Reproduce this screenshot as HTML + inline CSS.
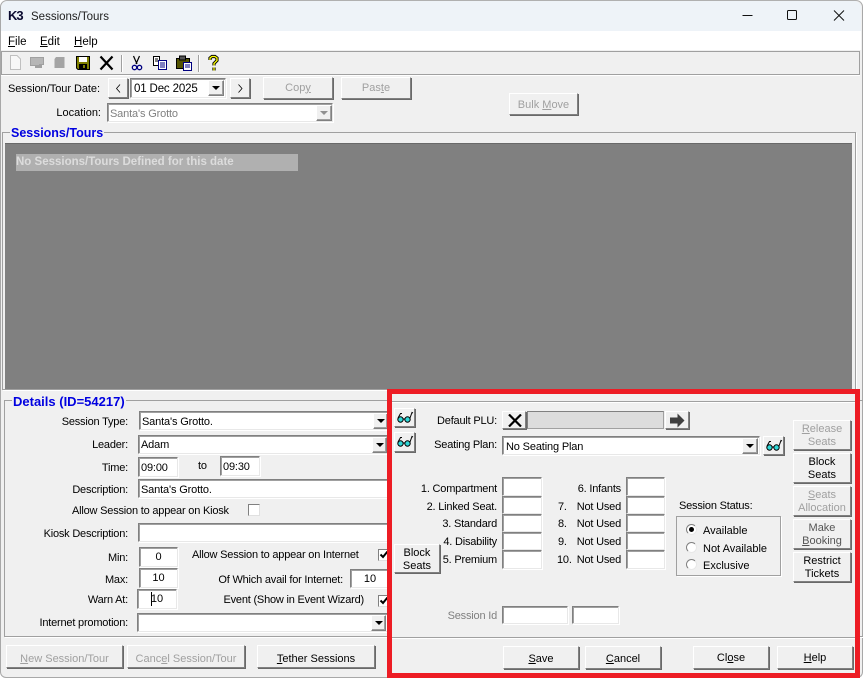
<!DOCTYPE html>
<html><head><meta charset="utf-8"><style>
*{box-sizing:border-box}
html,body{margin:0;padding:0;background:#fff}
#w{position:relative;width:863px;height:681px;overflow:hidden;background:#fff;font:11px/14px "Liberation Sans",sans-serif;color:#000}
#w div{position:absolute}
.t{white-space:nowrap;letter-spacing:-.2px}
.r{white-space:nowrap;text-align:right;letter-spacing:-.2px}
.n{letter-spacing:0}
.d{color:#a0a0a0}
.b{background:#f0f0f0;border:1px solid;border-color:#fff #808080 #808080 #fff;box-shadow:1px 1px 0 #696969;text-align:center;white-space:nowrap;line-height:13px;display:flex;align-items:center;justify-content:center}
.b.x{color:#a0a0a0}
.b.l{padding-top:2px}
.b.l2{padding-top:4px}
.b.l3{padding-top:5px}
.i{background:#fff;border:1px solid;border-color:#808080 #e8e8e8 #e8e8e8 #808080;box-shadow:inset 1px 1px 0 #a0a0a0,1px 1px 0 #fff;padding:3px 2px 0;white-space:nowrap;line-height:14px;letter-spacing:-.15px}
.c{text-align:center;padding-top:2px;letter-spacing:0}
.a{background:#f0f0f0;border:1px solid;border-color:#fff #808080 #808080 #fff;box-shadow:inset -1px -1px 0 #a0a0a0}
.a::after{content:"";position:absolute;left:3px;top:5px;border:4px solid transparent;border-top:4px solid #000;border-bottom:0}
.a.g::after{border-top-color:#909090}
.g1{border:1px solid #a0a0a0;box-shadow:1px 1px 0 #fff}
.ttl{color:#0000e0;font-weight:bold;background:#f0f0f0;white-space:nowrap;padding:0 1px;font-size:12.500px}
.chk{width:12px;height:12px;background:#fff;border:1px solid;border-color:#808080 #e0e0e0 #e0e0e0 #808080}
.rad{width:11px;height:11px;border-radius:50%;background:#fff;border:1px solid;border-color:#808080 #e8e8e8 #e8e8e8 #808080}
u{text-decoration:underline}
svg{position:absolute;display:block}
</style></head><body><div id="w">

<div style="left:0;top:0;width:863px;height:678px;background:#f0f0f0;border:1px solid #a8a8a8;border-top-color:#b0b0b0;border-radius:7px 7px 6px 6px"></div>
<div style="left:1px;top:1px;width:860px;height:30px;background:#eef3f8;border-radius:7px 7px 0 0"></div>
<div style="left:1px;top:31px;width:860px;height:19px;background:#fff"></div>

<div class="n" style="left:8px;top:9px;width:17px;height:14px;font:bold 13px/14px 'Liberation Sans',sans-serif;color:#0a0a30;letter-spacing:-1px;white-space:nowrap">K3</div>
<div class="t n" style="left:31px;top:10px;color:#222;font-size:11.500px">Sessions/Tours</div>
<svg style="left:740px;top:10px" width="110" height="12" fill="none" stroke="#111"><path d="M2.500 5.500H12.500"/><rect x="47.500" y="0.500" width="9" height="9" rx="1"/><path d="M94 0.500L104 10.500M104 0.500L94 10.500"/></svg>

<div class="t n" style="left:8px;top:35px;font-size:11.500px"><u>F</u>ile</div>
<div class="t n" style="left:40px;top:35px;font-size:11.500px"><u>E</u>dit</div>
<div class="t n" style="left:74px;top:35px;font-size:11.500px"><u>H</u>elp</div>

<div style="left:1px;top:51px;width:859px;height:24px;border:1px solid #a0a0a0;box-shadow:0 1px 0 #fff;background:#f0f0f0"></div>
<svg style="left:0;top:51px" width="240" height="24">
<path d="M10.500 4.500H17L20.500 8V18.500H10.500Z" fill="#f8f8f8" stroke="#c0c0c0"/>
<path d="M30 6H44V14H42V17H35V15H30Z" fill="#a0a0a0"/><path d="M32 7V14M34 7V14M36 7V14M38 7V14M40 7V13M42 7V13" stroke="#e0e0e0" stroke-width=".7"/>
<path d="M56 6H64.500V17H54.500V8Z" fill="#a4a4a4"/>
<path d="M76.500 5.500H89.500V18.500H78L76.500 17Z" fill="#808000" stroke="#000"/><rect x="79" y="6" width="8" height="5" fill="#fff"/><rect x="79" y="13" width="8" height="5" fill="#000"/><rect x="83" y="14" width="2" height="3" fill="#808000"/>
<path d="M100.500 5.500L112.500 18.500M112.500 5.500L100.500 18.500" stroke="#000" stroke-width="2.200"/>
<path d="M121.500 4V21" stroke="#a0a0a0"/><path d="M122.500 4V21" stroke="#fff"/>
<path d="M133.500 5L137 13M139.500 5L136 13" stroke="#000" stroke-width="1.200" fill="none"/><circle cx="134.500" cy="16.500" r="2.200" fill="none" stroke="#000080" stroke-width="1.300"/><circle cx="139.500" cy="16.500" r="2.200" fill="none" stroke="#000080" stroke-width="1.300"/>
<path d="M153.500 5.500H159.500V14.500H153.500Z" fill="#fff" stroke="#000"/><path d="M155 8H158M155 10H158" stroke="#000"/><path d="M158.500 9.500H166.500V18.500H158.500Z" fill="#fff" stroke="#000080"/><path d="M160 12H165M160 14H165M160 16H165" stroke="#000080"/>
<path d="M176.500 7.500H189.500V17.500H176.500Z" fill="#808000" stroke="#000"/><path d="M176 8h14v10h-14z" fill="#000" opacity=".35"/><rect x="179.500" y="5" width="6" height="4" fill="#555" stroke="#000"/><path d="M183.500 11.500H191.500V19.500H183.500Z" fill="#fff" stroke="#000080"/><path d="M185 14H190M185 16H190" stroke="#000080"/>
<path d="M198.500 4V21" stroke="#a0a0a0"/><path d="M199.500 4V21" stroke="#fff"/>
<path d="M210 9V7L212 5.500H215L217 7V9.500L214 12.500V14.500M214 16.500V19.500" fill="none" stroke="#000" stroke-width="3.200"/><path d="M210 9V7L212 5.500H215L217 7V9.500L214 12.500V14.500M214 16.500V19.500" fill="none" stroke="#ff0" stroke-width="1.300"/>
</svg>

<div class="r n" style="right:763px;top:82px;letter-spacing:-.05px">Session/Tour Date:</div>
<div class="b" style="left:108px;top:78px;width:20px;height:20px"><svg style="left:7px;top:5px" width="5" height="9"><path d="M4 .5L.5 4.500L4 8.500" fill="none" stroke="#000" stroke-width=".8"/></svg></div>
<div class="i n" style="left:130px;top:78px;width:96px;height:20px;font-size:11.500px;padding-left:3px">01 Dec 2025</div>
<div class="a" style="left:208px;top:80px;width:16px;height:16px"></div>
<div class="b" style="left:230px;top:78px;width:20px;height:20px"><svg style="left:7px;top:5px" width="5" height="9"><path d="M.5 .5L4 4.500L.5 8.500" fill="none" stroke="#000" stroke-width=".8"/></svg></div>
<div class="b x" style="left:263px;top:77px;width:70px;height:22px"><span>Cop<u>y</u></span></div>
<div class="b x" style="left:341px;top:77px;width:70px;height:22px"><span>Pas<u>t</u>e</span></div>
<div class="b x l" style="left:509px;top:93px;width:69px;height:22px"><span>Bulk <u>M</u>ove</span></div>
<div class="r n" style="right:762px;top:106px">Location:</div>
<div class="i d" style="left:107px;top:103px;width:226px;height:19px;color:#808080">Santa's Grotto</div>
<div class="a g" style="left:316px;top:105px;width:16px;height:16px"></div>

<div class="g1" style="left:2px;top:132px;width:854px;height:258px"></div>
<div style="left:5px;top:143px;width:847px;height:246px;background:#808080;border-top:1px solid #696969"></div>
<div style="left:16px;top:154px;width:282px;height:17px;background:#b0b0b0"></div>
<div class="t n" style="left:16px;top:155px;font-weight:bold;font-size:11.500px;color:#dcdcdc">No Sessions/Tours Defined for this date</div>
<div class="ttl" style="left:10px;top:126px">Sessions/Tours</div>

<div class="g1" style="left:4px;top:400px;width:860px;height:237px"></div>
<div class="ttl" style="left:12px;top:395px;font-size:13px">Details (ID=54217)</div>

<div class="r" style="right:735px;top:415px">Session Type:</div>
<div class="i" style="left:139px;top:411px;width:252px;height:19px">Santa's Grotto.</div>
<div class="a" style="left:373px;top:413px;width:15px;height:16px"></div>
<div class="r" style="right:735px;top:438px">Leader:</div>
<div class="i" style="left:138px;top:435px;width:252px;height:19px;padding-top:2px">Adam</div>
<div class="a" style="left:372px;top:437px;width:15px;height:16px"></div>
<div class="r" style="right:735px;top:461px">Time:</div>
<div class="i" style="left:138px;top:457px;width:40px;height:20px">09:00</div>
<div class="t" style="left:198px;top:459px">to</div>
<div class="i" style="left:220px;top:456px;width:40px;height:20px">09:30</div>
<div class="r" style="right:735px;top:483px">Description:</div>
<div class="i" style="left:138px;top:479px;width:252px;height:19px">Santa's Grotto.</div>
<div class="t" style="left:72px;top:504px">Allow Session to appear on Kiosk</div>
<div class="chk" style="left:248px;top:504px"></div>
<div class="r" style="right:735px;top:527px">Kiosk Description:</div>
<div class="i" style="left:138px;top:523px;width:252px;height:19px"></div>
<div class="r" style="right:735px;top:551px">Min:</div>
<div class="i c" style="left:139px;top:547px;width:39px;height:20px">0</div>
<div class="r" style="right:735px;top:573px">Max:</div>
<div class="i c" style="left:139px;top:568px;width:39px;height:20px">10</div>
<div class="r" style="right:735px;top:593px">Warn At:</div>
<div class="i c" style="left:137px;top:589px;width:40px;height:20px">10</div>
<div style="left:151px;top:592px;width:1px;height:14px;background:#000"></div>
<div class="t" style="left:192px;top:548px">Allow Session to appear on Internet</div>
<div class="chk" style="left:378px;top:549px"></div>
<svg style="left:379px;top:550px" width="10" height="10"><path d="M1.500 4.500L4 7L8.500 1.500" fill="none" stroke="#000" stroke-width="2"/></svg>
<div class="r" style="right:520px;top:573px">Of Which avail for Internet:</div>
<div class="i c" style="left:350px;top:569px;width:40px;height:19px">10</div>
<div class="r" style="right:499px;top:593px">Event (Show in Event Wizard)</div>
<div class="chk" style="left:378px;top:595px"></div>
<svg style="left:379px;top:596px" width="10" height="10"><path d="M1.500 4.500L4 7L8.500 1.500" fill="none" stroke="#000" stroke-width="2"/></svg>
<div class="r" style="right:735px;top:616px">Internet promotion:</div>
<div class="i" style="left:137px;top:613px;width:252px;height:19px"></div>
<div class="a" style="left:371px;top:615px;width:15px;height:16px"></div>

<div class="b x l3" style="left:6px;top:645px;width:117px;height:23px"><span><u>N</u>ew Session/Tour</span></div>
<div class="b x l3" style="left:127px;top:645px;width:118px;height:23px"><span>Canc<u>e</u>l Session/Tour</span></div>
<div class="b l3" style="left:257px;top:645px;width:118px;height:23px"><span><u>T</u>ether Sessions</span></div>

<!-- right panel -->
<div style="left:392px;top:394px;width:463px;height:279px;background:#f0f0f0"></div>
<div style="left:392px;top:401px;width:463px;height:1px;background:#a0a0a0"></div>
<div style="left:392px;top:402px;width:463px;height:1px;background:#fff"></div>
<div style="left:392px;top:637px;width:463px;height:1px;background:#a0a0a0"></div>
<div style="left:392px;top:638px;width:463px;height:1px;background:#fff"></div>

<div class="b" style="left:394px;top:408px;width:21px;height:19px"><svg style="left:2px;top:2px" width="17" height="14" fill="none"><circle cx="3.500" cy="8.500" r="2.700" fill="#30d8d8" stroke="#000"/><circle cx="10.500" cy="8.500" r="2.700" fill="#30d8d8" stroke="#000"/><path d="M6 8H8M1 7L3.500 2.500L5 2.500M13 7L15 1.500L16 2" stroke="#000"/></svg></div>
<div class="b" style="left:394px;top:432px;width:21px;height:20px"><svg style="left:2px;top:2px" width="17" height="14" fill="none"><circle cx="3.500" cy="8.500" r="2.700" fill="#30d8d8" stroke="#000"/><circle cx="10.500" cy="8.500" r="2.700" fill="#30d8d8" stroke="#000"/><path d="M6 8H8M1 7L3.500 2.500L5 2.500M13 7L15 1.500L16 2" stroke="#000"/></svg></div>
<div class="r" style="right:366px;top:414px">Default PLU:</div>
<div class="b" style="left:502px;top:411px;width:24px;height:18px"><svg style="left:5px;top:2px" width="14" height="13"><path d="M1 .5L13 12.500M13 .5L1 12.500" stroke="#000" stroke-width="2.200"/></svg></div>
<div style="left:527px;top:411px;width:137px;height:18px;background:#dcdcdc;border:1px solid;border-color:#808080 #a0a0a0 #a0a0a0 #808080"></div>
<div class="b" style="left:665px;top:411px;width:24px;height:18px"><svg style="left:3px;top:1px" width="17" height="15"><path d="M1 4.500H8.500V0.500L15.500 7.500L8.500 14.500V10.500H1Z" fill="#404040"/></svg></div>
<div class="r" style="right:366px;top:438px">Seating Plan:</div>
<div class="i n" style="left:502px;top:436px;width:258px;height:19px;padding-left:3px">No Seating Plan</div>
<div class="a" style="left:742px;top:438px;width:16px;height:16px"></div>
<div class="b" style="left:763px;top:436px;width:21px;height:19px"><svg style="left:2px;top:2px" width="17" height="14" fill="none"><circle cx="3.500" cy="8.500" r="2.700" fill="#30d8d8" stroke="#000"/><circle cx="10.500" cy="8.500" r="2.700" fill="#30d8d8" stroke="#000"/><path d="M6 8H8M1 7L3.500 2.500L5 2.500M13 7L15 1.500L16 2" stroke="#000"/></svg></div>

<div class="r" style="right:366px;top:482px">1. Compartment</div>
<div class="r" style="right:366px;top:500px">2. Linked Seat.</div>
<div class="r" style="right:366px;top:517px">3. Standard</div>
<div class="r" style="right:366px;top:535px">4. Disability</div>
<div class="r" style="right:366px;top:553px">5. Premium</div>
<div class="i" style="left:502px;top:477px;width:40px;height:19px"></div>
<div class="i" style="left:502px;top:496px;width:40px;height:18px"></div>
<div class="i" style="left:502px;top:514px;width:40px;height:18px"></div>
<div class="i" style="left:502px;top:532px;width:40px;height:18px"></div>
<div class="i" style="left:502px;top:550px;width:40px;height:19px"></div>
<div class="b l" style="left:394px;top:544px;width:46px;height:29px"><span>Block<br>Seats</span></div>

<div class="r" style="right:242px;top:482px">6. Infants</div>
<div class="t" style="left:558px;top:500px">7.</div><div class="r" style="right:242px;top:500px">Not Used</div>
<div class="t" style="left:558px;top:517px">8.</div><div class="r" style="right:242px;top:517px">Not Used</div>
<div class="t" style="left:558px;top:535px">9.</div><div class="r" style="right:242px;top:535px">Not Used</div>
<div class="t" style="left:557px;top:553px">10.</div><div class="r" style="right:242px;top:553px">Not Used</div>
<div class="i" style="left:626px;top:477px;width:39px;height:19px"></div>
<div class="i" style="left:626px;top:496px;width:39px;height:18px"></div>
<div class="i" style="left:626px;top:514px;width:39px;height:18px"></div>
<div class="i" style="left:626px;top:532px;width:39px;height:18px"></div>
<div class="i" style="left:626px;top:550px;width:39px;height:19px"></div>

<div class="t" style="left:679px;top:499px">Session Status:</div>
<div style="left:676px;top:516px;width:105px;height:60px;border:1px solid #a0a0a0;box-shadow:1px 1px 0 #fff"></div>
<div class="rad" style="left:686px;top:524px"></div><div style="left:689px;top:527px;width:5px;height:5px;border-radius:50%;background:#000"></div>
<div class="t n" style="left:703px;top:524px">Available</div>
<div class="rad" style="left:686px;top:542px"></div>
<div class="t n" style="left:703px;top:542px">Not Available</div>
<div class="rad" style="left:686px;top:559px"></div>
<div class="t n" style="left:703px;top:559px">Exclusive</div>

<div class="b x l" style="left:793px;top:420px;width:58px;height:30px"><span><u>R</u>elease<br>Seats</span></div>
<div class="b l" style="left:793px;top:453px;width:58px;height:30px"><span>Block<br>Seats</span></div>
<div class="b x l" style="left:793px;top:486px;width:58px;height:30px"><span><u>S</u>eats<br>Allocation</span></div>
<div class="b l" style="left:793px;top:519px;width:58px;height:30px;color:#555"><span>Make<br><u>B</u>ooking</span></div>
<div class="b l" style="left:793px;top:552px;width:58px;height:30px"><span>Restrict<br>Tickets</span></div>

<div class="r d" style="right:366px;top:609px;color:#808080">Session Id</div>
<div class="i" style="left:502px;top:606px;width:66px;height:18px"></div>
<div class="i" style="left:572px;top:606px;width:47px;height:18px"></div>

<div class="b l2" style="left:503px;top:646px;width:76px;height:23px"><span><u>S</u>ave</span></div>
<div class="b l2" style="left:585px;top:646px;width:76px;height:23px"><span><u>C</u>ancel</span></div>
<div class="b l" style="left:693px;top:646px;width:76px;height:23px"><span>Cl<u>o</u>se</span></div>
<div class="b l" style="left:777px;top:646px;width:76px;height:23px"><span><u>H</u>elp</span></div>

<div style="left:387px;top:389px;width:473px;height:289px;border:5px solid #ed1c24"></div>
</div></body></html>
